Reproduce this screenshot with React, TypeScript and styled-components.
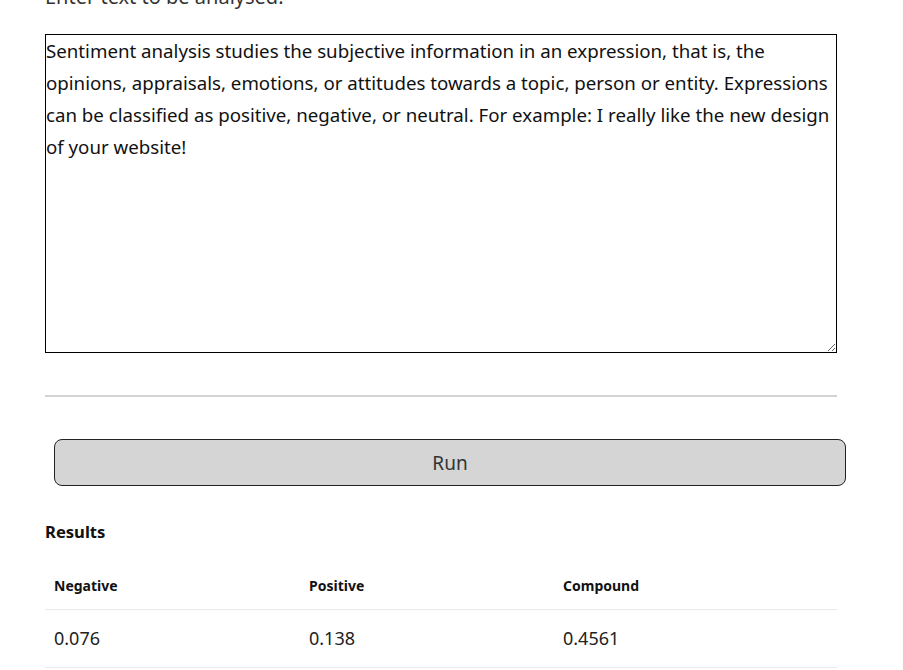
import { useState } from "react";
import styled, { createGlobalStyle } from "styled-components";

const GlobalStyle = createGlobalStyle`
    html, body {
        margin: 0;
        padding: 0;
        background: #ffffff;
        overflow: hidden;
    }
    body {
        font-family: "Noto Sans", "Open Sans", sans-serif;
        color: #222222;
    }
`;

const sampleText =
    "Sentiment analysis studies the subjective information in an expression, that is, the opinions, appraisals, emotions, or attitudes towards a topic, person or entity. Expressions can be classified as positive, negative, or neutral. For example: I really like the new design of your website!";

const results = [
    { label: "Negative", value: "0.076" },
    { label: "Positive", value: "0.138" },
    { label: "Compound", value: "0.4561" },
];

const App = () => {
    const [text, setText] = useState(sampleText);

    return (
        <>
            <GlobalStyle />
            <Page>
                <Label htmlFor="input-text">Enter text to be analysed:</Label>
                <TextArea
                    id="input-text"
                    value={text}
                    onChange={(e) => setText(e.target.value)} />
                <Divider />
                <RunButton type="button">Run</RunButton>
                <ResultsTitle>Results</ResultsTitle>
                <ResultsTable>
                    <colgroup>
                        <col style={{ width: 255 }} />
                        <col style={{ width: 254 }} />
                        <col />
                    </colgroup>
                    <thead>
                        <tr>
                            {results.map((r) => (
                                <HeadCell key={r.label}>{r.label}</HeadCell>
                            ))}
                        </tr>
                    </thead>
                    <tbody>
                        <tr>
                            {results.map((r) => (
                                <ValueCell key={r.label}>{r.value}</ValueCell>
                            ))}
                        </tr>
                    </tbody>
                </ResultsTable>
            </Page>
        </>
    );
};

export default App;

const Page = styled.main`
    width: 792px;
    padding-left: 45px;
    display: flex;
    flex-direction: column;
    align-items: flex-start;
`

const Label = styled.label`
    display: block;
    font-size: 20px;
    line-height: 24px;
    color: #333333;
    margin-top: -15px;
    margin-bottom: 25px;
`

const TextArea = styled.textarea`
    box-sizing: border-box;
    width: 792px;
    height: 319px;
    margin: 0;
    padding: 0;
    border: 1px solid #000000;
    border-radius: 0;
    font-family: "Noto Sans", "Open Sans", sans-serif;
    font-size: 18.7px;
    line-height: 32px;
    color: #111111;
    resize: both;
    outline: none;
`

const Divider = styled.hr`
    width: 792px;
    height: 0;
    margin: 42px 0 0;
    border: none;
    border-top: 2px solid #d3d3d3;
`

const RunButton = styled.button`
    box-sizing: border-box;
    width: 792px;
    height: 47px;
    margin: 42px 0 0 9px;
    border: 1px solid #222222;
    border-radius: 8px;
    background: #d5d5d5;
    font-family: "Noto Sans", "Open Sans", sans-serif;
    font-size: 19px;
    color: #333333;
    cursor: pointer;
`

const ResultsTitle = styled.h3`
    margin: 34px 0 0;
    font-size: 16.6px;
    line-height: 24px;
    font-weight: 700;
    color: #111111;
`

const ResultsTable = styled.table`
    width: 792px;
    margin-top: 17px;
    border-collapse: collapse;
    table-layout: fixed;
`

const HeadCell = styled.th`
    text-align: left;
    padding: 15px 9px 13px;
    font-size: 14px;
    font-weight: 700;
    line-height: 20px;
    color: #111111;
    border-bottom: 1px solid #ebebeb;
`

const ValueCell = styled.td`
    padding: 15px 9px 16px;
    font-size: 18px;
    line-height: 26px;
    color: #222222;
    border-bottom: 1px solid #ebebeb;
`
